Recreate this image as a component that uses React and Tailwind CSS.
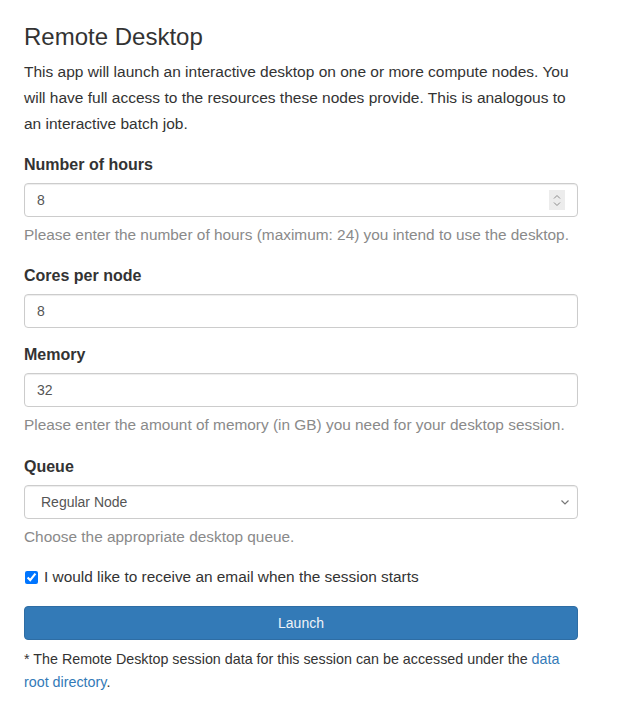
import React, { useState } from "react";

const inputCls =
  "block w-full h-[34px] px-3 text-[14px] text-[#555] bg-white border border-[#ccc] rounded-[4px] outline-none shadow-[inset_0_1px_1px_rgba(0,0,0,0.075)]";

const Label = ({ children, htmlFor }) => (
  <label htmlFor={htmlFor} className="block font-bold text-[16px] leading-[24px] text-[#333] mb-[6px]">
    {children}
  </label>
);

const Help = ({ children }) => (
  <p className="mt-[5px] text-[15.4px] leading-[26px] text-[#8a8a8a]">{children}</p>
);

const App = () => {
  const [hours, setHours] = useState("8");
  const [cores, setCores] = useState("8");
  const [memory, setMemory] = useState("32");
  const [queue, setQueue] = useState("regular");
  const [email, setEmail] = useState(true);

  return (
    <div
      className="min-h-screen bg-white text-[#333]"
      style={{ fontFamily: '"Liberation Sans", Arial, sans-serif' }}
    >
      <form className="w-[554px] ml-6 pt-[23px] pb-4" onSubmit={(e) => e.preventDefault()}>
        <h1 className="text-[24px] leading-[28px] font-normal text-[#333] mb-[8px]">Remote Desktop</h1>
        <p className="text-[15.5px] leading-[26px] text-[#333]">
          This app will launch an interactive desktop on one or more compute nodes. You will have
          full access to the resources these nodes provide. This is analogous to an interactive
          batch job.
        </p>

        <div className="mt-[16px]">
          <Label htmlFor="hours">Number of hours</Label>
          <div className="relative">
            <input
              id="hours"
              type="text"
              className={inputCls}
              value={hours}
              onChange={(e) => setHours(e.target.value)}
            />
            {/* number spinner */}
            <div className="absolute right-[13px] top-[7px] w-[16px] h-[20px] bg-[#ececec] flex flex-col items-center justify-center gap-[3px]">
              <svg width="8" height="5" viewBox="0 0 8 5">
                <path d="M1 4.5 L4 1.5 L7 4.5" fill="none" stroke="#8a8a8a" strokeWidth="1" />
              </svg>
              <svg width="8" height="5" viewBox="0 0 8 5">
                <path d="M1 0.5 L4 3.5 L7 0.5" fill="none" stroke="#8a8a8a" strokeWidth="1" />
              </svg>
            </div>
          </div>
          <Help>Please enter the number of hours (maximum: 24) you intend to use the desktop.</Help>
        </div>

        <div className="mt-[16px]">
          <Label htmlFor="cores">Cores per node</Label>
          <input
            id="cores"
            type="text"
            className={inputCls}
            value={cores}
            onChange={(e) => setCores(e.target.value)}
          />
        </div>

        <div className="mt-[15px]">
          <Label htmlFor="memory">Memory</Label>
          <input
            id="memory"
            type="text"
            className={inputCls}
            value={memory}
            onChange={(e) => setMemory(e.target.value)}
          />
          <Help>Please enter the amount of memory (in GB) you need for your desktop session.</Help>
        </div>

        <div className="mt-[17px]">
          <Label htmlFor="queue">Queue</Label>
          <div className="relative">
            <select
              id="queue"
              className={inputCls + " appearance-none pl-4"}
              value={queue}
              onChange={(e) => setQueue(e.target.value)}
            >
              <option value="regular">Regular Node</option>
              <option value="bigmem">Big Memory Node</option>
            </select>
            <svg
              className="absolute right-[8px] top-[14px] pointer-events-none"
              width="10"
              height="7"
              viewBox="0 0 10 7"
            >
              <path d="M1.5 1.5 L5 5 L8.5 1.5" fill="none" stroke="#777" strokeWidth="1.2" />
            </svg>
          </div>
          <Help>Choose the appropriate desktop queue.</Help>
        </div>

        <label className="mt-[15px] flex items-center h-[24px] text-[15.4px] text-[#333]">
          <input
            type="checkbox"
            checked={email}
            onChange={(e) => setEmail(e.target.checked)}
            className="w-[13px] h-[13px] ml-[1px] mr-[6px] accent-[#0075ff]"
          />
          I would like to receive an email when the session starts
        </label>

        <button
          type="submit"
          className="mt-[17px] block w-full h-[34px] bg-[#337ab7] border border-[#2e6da4] rounded-[4px] text-[14px] text-[#eef3f8]"
        >
          Launch
        </button>

        <p className="mt-[8px] text-[14.3px] leading-[23px] text-[#333]">
          * The Remote Desktop session data for this session can be accessed under the{" "}
          <a href="#" className="text-[#337ab7]">
            data root directory
          </a>
          .
        </p>
      </form>
    </div>
  );
};

export default App;
